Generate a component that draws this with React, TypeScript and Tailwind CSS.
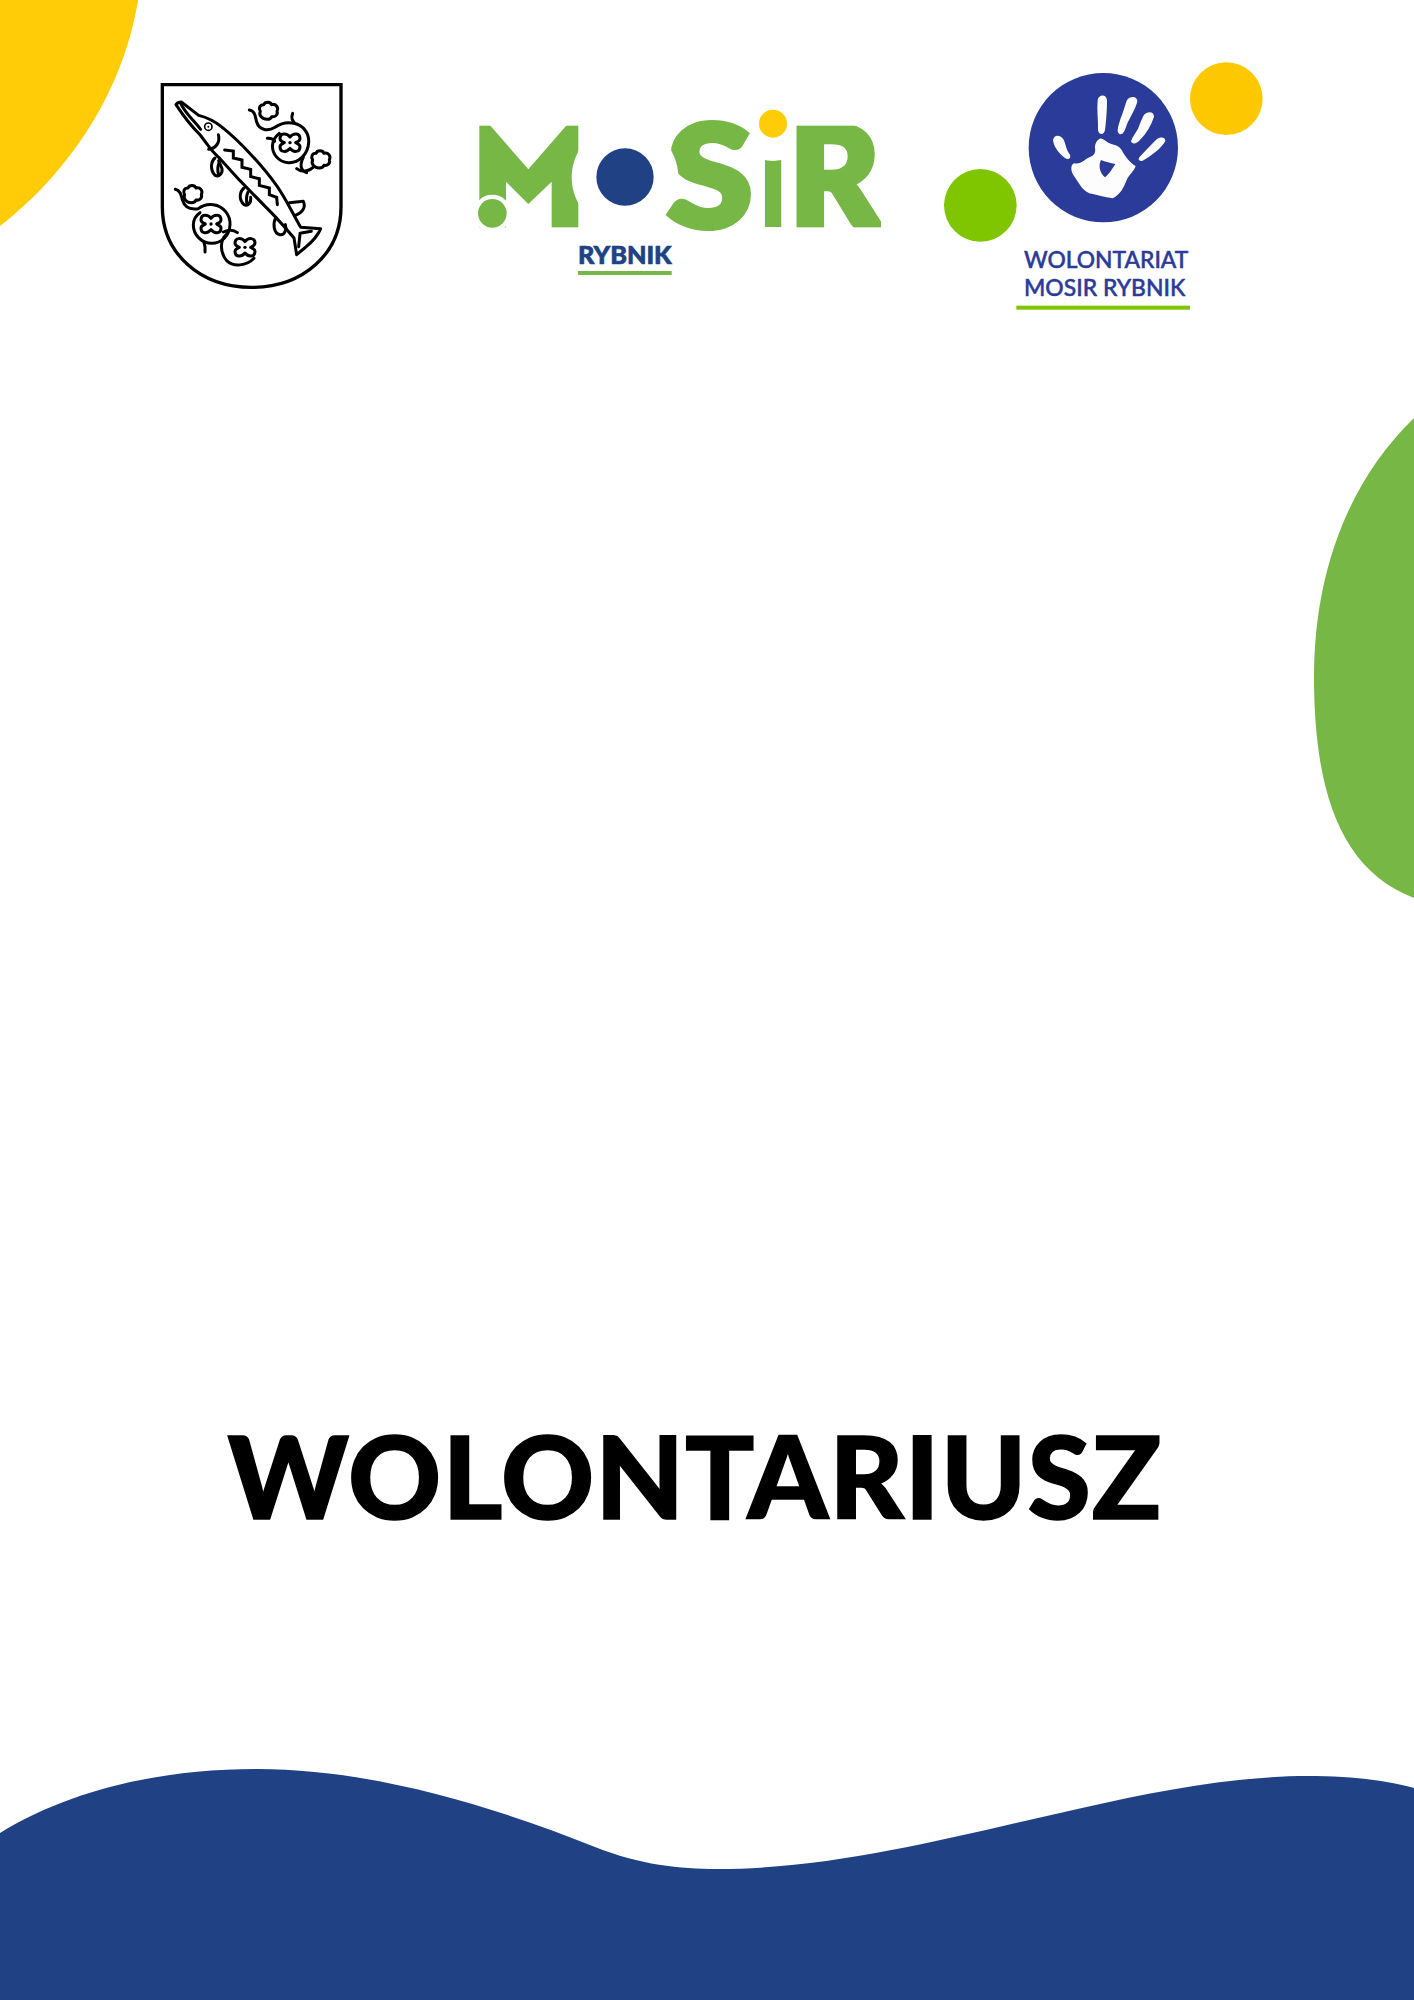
const lato = "font-['Lato',sans-serif]";

function Flower({ x, y }: { x: number; y: number }) {
  return (
    <g transform={`translate(${x} ${y})`}>
      <path d="M0 -17 C10 -30 30 -30 30 -12 C30 -6 24 -3 17 0 C24 3 30 6 30 12 C30 30 10 30 0 17 C-10 30 -30 30 -30 12 C-30 6 -24 3 -17 0 C-24 -3 -30 -6 -30 -12 C-30 -30 -10 -30 0 -17 Z" />
      <circle r="5" fill="#000" stroke="none" />
    </g>
  );
}

function Leaf({ x, y, turn = 0 }: { x: number; y: number; turn?: number }) {
  return (
    <path
      transform={`translate(${x} ${y}) rotate(${turn})`}
      d="M-4 26 C-18 26 -30 14 -24 2 C-30 -8 -26 -18 -14 -18 C-10 -28 6 -28 10 -18 C22 -22 32 -10 26 2 C30 12 20 20 10 18 C8 24 2 26 -4 26 Z"
    />
  );
}

function CityShield() {
  return (
    <svg viewBox="0 0 660 690" className="w-[220px] h-[230px] shrink-0 mt-[20px]" fill="none" stroke="#000" strokeWidth="9" strokeLinejoin="round" strokeLinecap="round">
      <path d="M67 44 H603 V410 C603 550 490 652 335 652 C180 652 67 550 67 410 Z" strokeLinecap="butt" strokeLinejoin="miter" strokeWidth="10" />
      {/* pike */}
      <path d="M108 104 C112 98 118 96 124 96 L176 136 C200 142 222 152 244 170 C300 214 370 290 412 350 C436 384 458 430 482 472 L542 476 C530 506 506 524 494 534 L470 554 L462 504 C440 478 410 444 388 422 L300 332 L236 262 C210 240 195 212 178 192 C150 165 125 130 108 104 Z" />
      <path d="M122 100 C136 130 160 150 182 178" />
      <circle cx="205" cy="170" r="11" strokeWidth="5" />
      <circle cx="205" cy="170" r="3" fill="#000" stroke="none" />
      <path d="M235 194 C242 218 226 236 206 238" />
      <path strokeLinejoin="miter" d="M254 240 L280 243 L280 264 L306 270 L306 292 L332 298 L332 320 L358 326 L358 346 L388 354 L388 374 L410 382 L412 404" />
      <path d="M225 264 C212 275 210 300 225 316 C238 322 248 310 246 296 L236 272" />
      <path d="M238 276 C232 290 232 302 236 314" />
      <path d="M312 354 C298 366 296 390 312 404 C324 410 334 398 332 382" />
      <path d="M324 366 C318 380 318 392 322 404" />
      <path d="M408 442 C398 460 400 490 420 494 C436 496 440 474 436 464" />
      <path d="M448 398 L490 394 C498 412 488 428 466 436" />
      <path d="M480 492 L476 530 M480 490 L514 484" />
      {/* vine top right */}
      <path d="M328 120 C345 122 346 140 350 156 C358 182 385 184 405 172 C425 158 445 156 462 160 C490 166 508 190 506 218 C504 254 475 280 445 278 C415 276 394 250 398 222 C400 208 408 198 418 190" />
      <path d="M382 205 C392 204 400 208 404 214" />
      <path d="M458 130 C452 145 458 152 464 160" />
      <path d="M490 262 C478 285 482 302 500 308 M470 296 C480 304 500 310 522 290" />
      <Flower x={450} y={218} />
      <Leaf x={385} y={122} />
      <Leaf x={542} y={268} />
      {/* vine bottom left */}
      <path d="M106 358 C124 362 124 380 128 392 C134 412 150 420 175 416 C190 404 205 402 220 404 C250 408 272 435 270 465 C268 498 245 520 215 520 C185 520 160 495 160 465 C160 450 168 436 180 428" />
      <path d="M192 518 C196 528 196 536 195 546" />
      <path d="M250 486 C268 478 282 480 292 488 M260 492 C240 510 238 545 260 572 C280 592 320 588 342 565" />
      <Flower x={213} y={462} />
      <Flower x={315} y={532} />
      <Leaf x={158} y={372} />
    </svg>
  );
}

function MosirLogo() {
  const letter = `${lato} font-black`;
  return (
    <svg viewBox="0 0 1320 600" className="w-[440px] h-[200px] shrink-0 mt-[40px] overflow-visible">
      <text x="890" y="412" fontSize="424" textLength="98" lengthAdjust="spacingAndGlyphs" fill="#76b745" className={letter}>I</text>
      <circle cx="939" cy="101" r="112" fill="#fff" />
      <circle cx="939" cy="101" r="42" fill="#ffcc07" />
      <text x="40" y="412" fontSize="424" textLength="335" lengthAdjust="spacingAndGlyphs" fill="#76b745" stroke="#76b745" strokeWidth="70" className={letter}>M</text>
      <text x="620" y="412" fontSize="424" textLength="258" lengthAdjust="spacingAndGlyphs" fill="#76b745" stroke="#76b745" strokeWidth="18" className={letter}>S</text>
      <text x="988" y="412" fontSize="424" textLength="272" lengthAdjust="spacingAndGlyphs" fill="#76b745" stroke="#76b745" strokeWidth="20" className={letter}>R</text>
      {/* trim the heavier wordmark back to its box */}
      <rect x="0" y="30" width="58" height="420" fill="#fff" />
      <rect x="0" y="30" width="390" height="77" fill="#fff" />
      <rect x="355" y="30" width="30" height="420" fill="#fff" />
      <rect x="0" y="412" width="385" height="40" fill="#fff" />
      <rect x="1006" y="70" width="290" height="37" fill="#fff" />
      <rect x="990" y="412" width="300" height="30" fill="#fff" />
      <rect x="1263" y="100" width="40" height="320" fill="#fff" />
      <rect x="985" y="100" width="21" height="320" fill="#fff" />
      <polygon points="85,100 205,238 325,100" fill="#fff" />
      <polygon points="138,275 205,342 275,275 275,415 138,415" fill="#fff" />
      <circle cx="97" cy="370" r="56" fill="#fff" />
      <circle cx="97" cy="370" r="43" fill="#76b745" />
      <circle cx="495" cy="262" r="160" fill="#fff" />
      <circle cx="495" cy="261" r="86" fill="#204285" />
      <text x="354" y="521" fontSize="74" textLength="281" lengthAdjust="spacingAndGlyphs" fill="#204285" stroke="#204285" strokeWidth="2" className={letter}>RYBNIK</text>
      <rect x="354" y="543" width="281" height="12" fill="#76b745" />
    </svg>
  );
}

function VolunteerLogo() {
  return (
    <svg viewBox="0 0 1050 810" className="w-[350px] h-[270px] shrink-0 overflow-visible">
      <circle cx="889" cy="146" r="109" fill="#fdc800" />
      <circle cx="151" cy="466" r="109" fill="#80c600" />
      <circle cx="520" cy="293" r="224" fill="#2b3b99" />
      <g fill="#fdfdfd">
        <path d="M503 150 C505 135 528 130 531 150 C531 185 528 215 525 240 C522 256 506 256 504 240 C505 210 500 180 503 150 Z" />
        <path d="M590 152 C596 138 622 135 622 155 C615 180 598 205 590 225 C584 245 578 256 568 252 C558 245 566 225 572 205 C578 190 584 170 590 152 Z" />
        <path d="M640 198 C648 184 672 182 672 200 C664 225 650 250 630 270 C620 282 606 284 603 274 C606 262 618 248 624 236 C630 222 634 210 640 198 Z" />
        <path d="M680 268 C690 260 706 260 706 273 C695 295 660 320 638 332 C628 335 623 330 628 322 C645 305 662 285 680 268 Z" />
        <path d="M369 270 C372 252 392 254 400 268 C408 282 408 300 420 314 C424 326 414 330 405 324 C390 312 372 295 369 270 Z" />
        <path fillRule="evenodd" d="M508 267 C516 262 524 272 535 278 C550 285 565 284 575 300 C585 320 600 338 617 348 C612 365 596 375 590 390 C580 415 572 432 548 445 C525 442 500 435 478 430 C455 420 445 395 432 378 C420 362 422 340 435 340 C450 345 470 325 478 322 C490 318 498 310 495 295 C494 282 500 272 508 267 Z M513 330 C505 345 508 368 525 382 C535 375 548 355 556 342 C542 340 525 335 513 330 Z" />
      </g>
      <text x="282" y="654" fontSize="69" textLength="493" lengthAdjust="spacingAndGlyphs" fill="#2b3b99" stroke="#2b3b99" strokeWidth="1.5" className={`${lato} font-medium`}>WOLONTARIAT</text>
      <text x="282" y="737" fontSize="69" textLength="484" lengthAdjust="spacingAndGlyphs" fill="#2b3b99" stroke="#2b3b99" strokeWidth="1.5" className={`${lato} font-medium`}>MOSIR RYBNIK</text>
      <rect x="259" y="767" width="521" height="12" fill="#80c600" />
    </svg>
  );
}

export default function App() {
  return (
    <div className="relative w-full h-[2000px] overflow-hidden bg-white flex flex-col">
      <svg viewBox="0 0 138 226" className="absolute left-0 top-0 w-[138px] h-[226px]">
        <path d="M0 0 H138 C124 88 72 170 0 226 Z" fill="#ffcc07" />
      </svg>
      <svg viewBox="1314 418 100 480" className="absolute right-0 top-[418px] w-[100px] h-[480px]">
        <path d="M1414 418 C1350 480 1314 570 1314 677 C1314 790 1340 870 1414 898 Z" fill="#76b745" />
      </svg>

      <header className="flex items-start pt-[50px] pl-[140px]">
        <CityShield />
        <div className="ml-[100px]">
          <MosirLogo />
        </div>
        <div className="ml-[30px]">
          <VolunteerLogo />
        </div>
      </header>

      <h1 className={`${lato} font-black text-black text-[115px] leading-none text-center pr-[24px] mt-[1097px] tracking-[1px] [-webkit-text-stroke:1.5px_black]`}>
        WOLONTARIUSZ
      </h1>

      <svg viewBox="0 1760 1414 240" className="mt-auto w-full h-[240px] shrink-0">
        <path
          d="M0 1833 C70 1790 160 1769 257 1769 C370 1769 490 1805 595 1847 C640 1865 680 1869 717 1869 C840 1869 960 1835 1082 1808 C1160 1790 1240 1776 1307 1776 C1350 1776 1385 1780 1414 1788 V2000 H0 Z"
          fill="#204285"
        />
      </svg>
    </div>
  );
}
